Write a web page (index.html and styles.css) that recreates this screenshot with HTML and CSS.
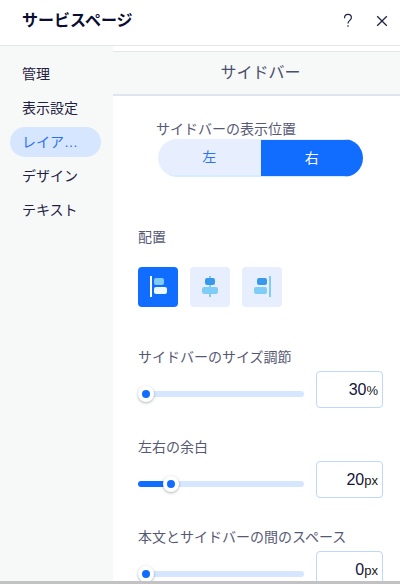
FILE: index.html
```html
<!DOCTYPE html>
<html lang="ja">
<head>
  <meta charset="UTF-8">
  <meta name="viewport" content="width=device-width, initial-scale=1.0">
  <title>サービスページ</title>
  <link rel="stylesheet" href="styles.css">
</head>
<body>
  <div class="panel">
    <header class="panel-header">
      <h1>サービスページ</h1>
      <button class="icon-button" type="button" aria-label="ヘルプ">
        <svg width="12" height="16" viewBox="0 0 12 16" fill="none" stroke="currentColor" stroke-width="1.2">
          <path d="M2.6 5.2V4.6a3.4 3.2 0 0 1 6.8 0c0 2.9-3.4 2.7-3.4 6"/>
          <path d="M6 12.2v1.6"/>
        </svg>
      </button>
      <button class="icon-button" type="button" aria-label="閉じる">
        <svg width="12" height="12" viewBox="0 0 12 12" fill="none" stroke="currentColor" stroke-width="1.3">
          <path d="M1.2 1.2l9.6 9.6M10.8 1.2L1.2 10.8"/>
        </svg>
      </button>
    </header>

    <div class="panel-body">
      <nav class="tabs">
        <a href="#manage">管理</a>
        <a href="#display">表示設定</a>
        <a class="active" href="#layout" aria-current="page">レイアウト</a>
        <a href="#design">デザイン</a>
        <a href="#text">テキスト</a>
      </nav>

      <main class="content">
        <h2>サイドバー</h2>

        <form class="settings">
          <div class="field position">
            <span class="label" id="position-label">サイドバーの表示位置</span>
            <div class="toggle" role="group" aria-labelledby="position-label">
              <button type="button" aria-pressed="false">左</button>
              <button class="selected" type="button" aria-pressed="true">右</button>
            </div>
          </div>

          <div class="field align">
            <span class="label" id="align-label">配置</span>
            <div class="align-options" role="group" aria-labelledby="align-label">
              <button class="selected" type="button" aria-label="左揃え" aria-pressed="true">
                <svg width="40" height="40" viewBox="0 0 40 40">
                  <rect x="12" y="9" width="2" height="21" fill="#fff"/>
                  <rect x="16" y="11" width="10" height="7" rx="2" fill="#7fccf7"/>
                  <rect x="16" y="20" width="13" height="7" rx="2" fill="#eef8ff"/>
                </svg>
              </button>
              <button type="button" aria-label="中央揃え" aria-pressed="false">
                <svg width="40" height="40" viewBox="0 0 40 40">
                  <rect x="19" y="9" width="2" height="21" fill="#7fccf7"/>
                  <rect x="15" y="11" width="10" height="7" rx="2" fill="#3899ec"/>
                  <rect x="12" y="20" width="16" height="7" rx="2" fill="#7fccf7"/>
                </svg>
              </button>
              <button type="button" aria-label="右揃え" aria-pressed="false">
                <svg width="40" height="40" viewBox="0 0 40 40">
                  <rect x="27" y="9" width="2" height="21" fill="#7fccf7"/>
                  <rect x="15" y="11" width="10" height="7" rx="2" fill="#3899ec"/>
                  <rect x="12" y="20" width="13" height="7" rx="2" fill="#7fccf7"/>
                </svg>
              </button>
            </div>
          </div>

          <div class="field">
            <label class="label" for="size">サイドバーのサイズ調節</label>
            <div class="slider-row">
              <input class="slider" id="size" type="range" min="30" max="50" value="30" style="--fill: 0%">
              <div class="value-box">
                <input type="text" value="30" aria-label="サイドバーのサイズ (%)">
                <span>%</span>
              </div>
            </div>
          </div>

          <div class="field">
            <label class="label" for="margin">左右の余白</label>
            <div class="slider-row">
              <input class="slider" id="margin" type="range" min="0" max="120" value="20" style="--fill: 17%">
              <div class="value-box">
                <input type="text" value="20" aria-label="左右の余白 (px)">
                <span>px</span>
              </div>
            </div>
          </div>

          <div class="field">
            <label class="label" for="space">本文とサイドバーの間のスペース</label>
            <div class="slider-row">
              <input class="slider" id="space" type="range" min="0" max="120" value="0" style="--fill: 0%">
              <div class="value-box">
                <input type="text" value="0" aria-label="本文とサイドバーの間のスペース (px)">
                <span>px</span>
              </div>
            </div>
          </div>
        </form>
      </main>
    </div>
  </div>
</body>
</html>
```
FILE: styles.css
```css
* {
  box-sizing: border-box;
}

body {
  margin: 0;
  font-family: "Liberation Sans", "Noto Sans CJK JP", sans-serif;
  font-size: 14px;
  line-height: 20px;
  color: #1e2144;
  background-color: #fff;
}

button,
input {
  font: inherit;
  border: none;
  padding: 0;
  margin: 0;
}

button {
  cursor: pointer;
}

.panel {
  display: flex;
  flex-direction: column;
  height: 100vh;
  overflow: hidden;
  border-bottom: 3px solid #c2c2c2;
}

/* Header */
.panel-header {
  display: flex;
  align-items: center;
  flex-shrink: 0;
  gap: 10px;
  padding: 9px 6px 12px 22px;
  border-bottom: 1px solid #e4e6ea;
}

.panel-header h1 {
  flex: 1;
  margin: 0;
  font-size: 16px;
  line-height: 20px;
  font-weight: bold;
  color: #0b0d30;
}

.icon-button {
  display: flex;
  align-items: center;
  justify-content: center;
  width: 24px;
  height: 24px;
  background: none;
  color: #1e2144;
}

.panel-body {
  display: flex;
  flex: 1;
  min-height: 0;
}

/* Side tabs */
.tabs {
  display: flex;
  flex-direction: column;
  flex-shrink: 0;
  gap: 4px;
  width: 113px;
  padding: 13px 12px 0 10px;
  background-color: #f7f9f8;
}

.tabs a {
  padding: 5px 20px 5px 12px;
  border-radius: 15px;
  overflow: hidden;
  text-overflow: ellipsis;
  white-space: nowrap;
  text-decoration: none;
  color: #1e2144;
}

.tabs a.active {
  background-color: #d6e6fe;
  color: #2b72f5;
}

/* Content */
.content {
  flex: 1;
  min-width: 0;
  padding-top: 5px;
  overflow: hidden;
}

.content h2 {
  margin: 0;
  padding: 10px 0 10px 8px;
  border-top: 1px solid #e4e6ea;
  border-bottom: 2px solid #dfe5ee;
  background-color: #f7f9f8;
  font-size: 16px;
  line-height: 22px;
  font-weight: normal;
  text-align: center;
  color: #4a4d6c;
}

.settings {
  padding: 23px 17px 0 25px;
}

.field {
  margin-bottom: 29px;
}

.label {
  display: block;
  margin-bottom: 4px;
  color: #565975;
}

.position {
  margin-bottom: 50px;
}

.position .label {
  margin: 0 0 0 18px;
}

.toggle {
  display: flex;
  margin: 0 20px;
  border-radius: 19px;
  overflow: hidden;
}

.toggle button {
  flex: 1;
  height: 38px;
  background-color: #e7efff;
  border-bottom: 2px solid #d6edff;
  color: #2b72f5;
}

.toggle button.selected {
  background-color: #116dff;
  border-top: 1px solid #e7efff;
  border-bottom: 1px solid #d6edff;
  color: #fff;
}

.align {
  margin-bottom: 40px;
}

.align .label {
  margin-bottom: 20px;
}

.align-options {
  display: flex;
  gap: 12px;
}

.align-options button {
  width: 40px;
  height: 40px;
  border-radius: 4px;
  background-color: #e7efff;
}

.align-options button.selected {
  background-color: #116dff;
}

.align-options svg {
  display: block;
}

.slider-row {
  display: flex;
  align-items: center;
  gap: 12px;
}

.slider {
  flex: 1;
  min-width: 0;
  height: 16px;
  margin-top: 8px;
  appearance: none;
  background: none;
}

.slider::-webkit-slider-runnable-track {
  height: 6px;
  border-radius: 3px;
  background: linear-gradient(to right, #116dff var(--fill), #d6e6fe var(--fill));
}

.slider::-webkit-slider-thumb {
  appearance: none;
  width: 16px;
  height: 16px;
  margin-top: -5px;
  border: 4px solid #fff;
  border-radius: 50%;
  background-color: #116dff;
  box-shadow: 0 1px 3px rgba(22, 45, 61, 0.35);
}

.value-box {
  display: flex;
  align-items: baseline;
  width: 67px;
  height: 37px;
  padding: 8px 4px;
  border: 1px solid #bdd7ff;
  border-radius: 4px;
  color: #131720;
}

.value-box input {
  flex: 1;
  min-width: 0;
  font-size: 16px;
  text-align: right;
  background: none;
  color: #131540;
}

.value-box span {
  font-size: 13px;
}
```
